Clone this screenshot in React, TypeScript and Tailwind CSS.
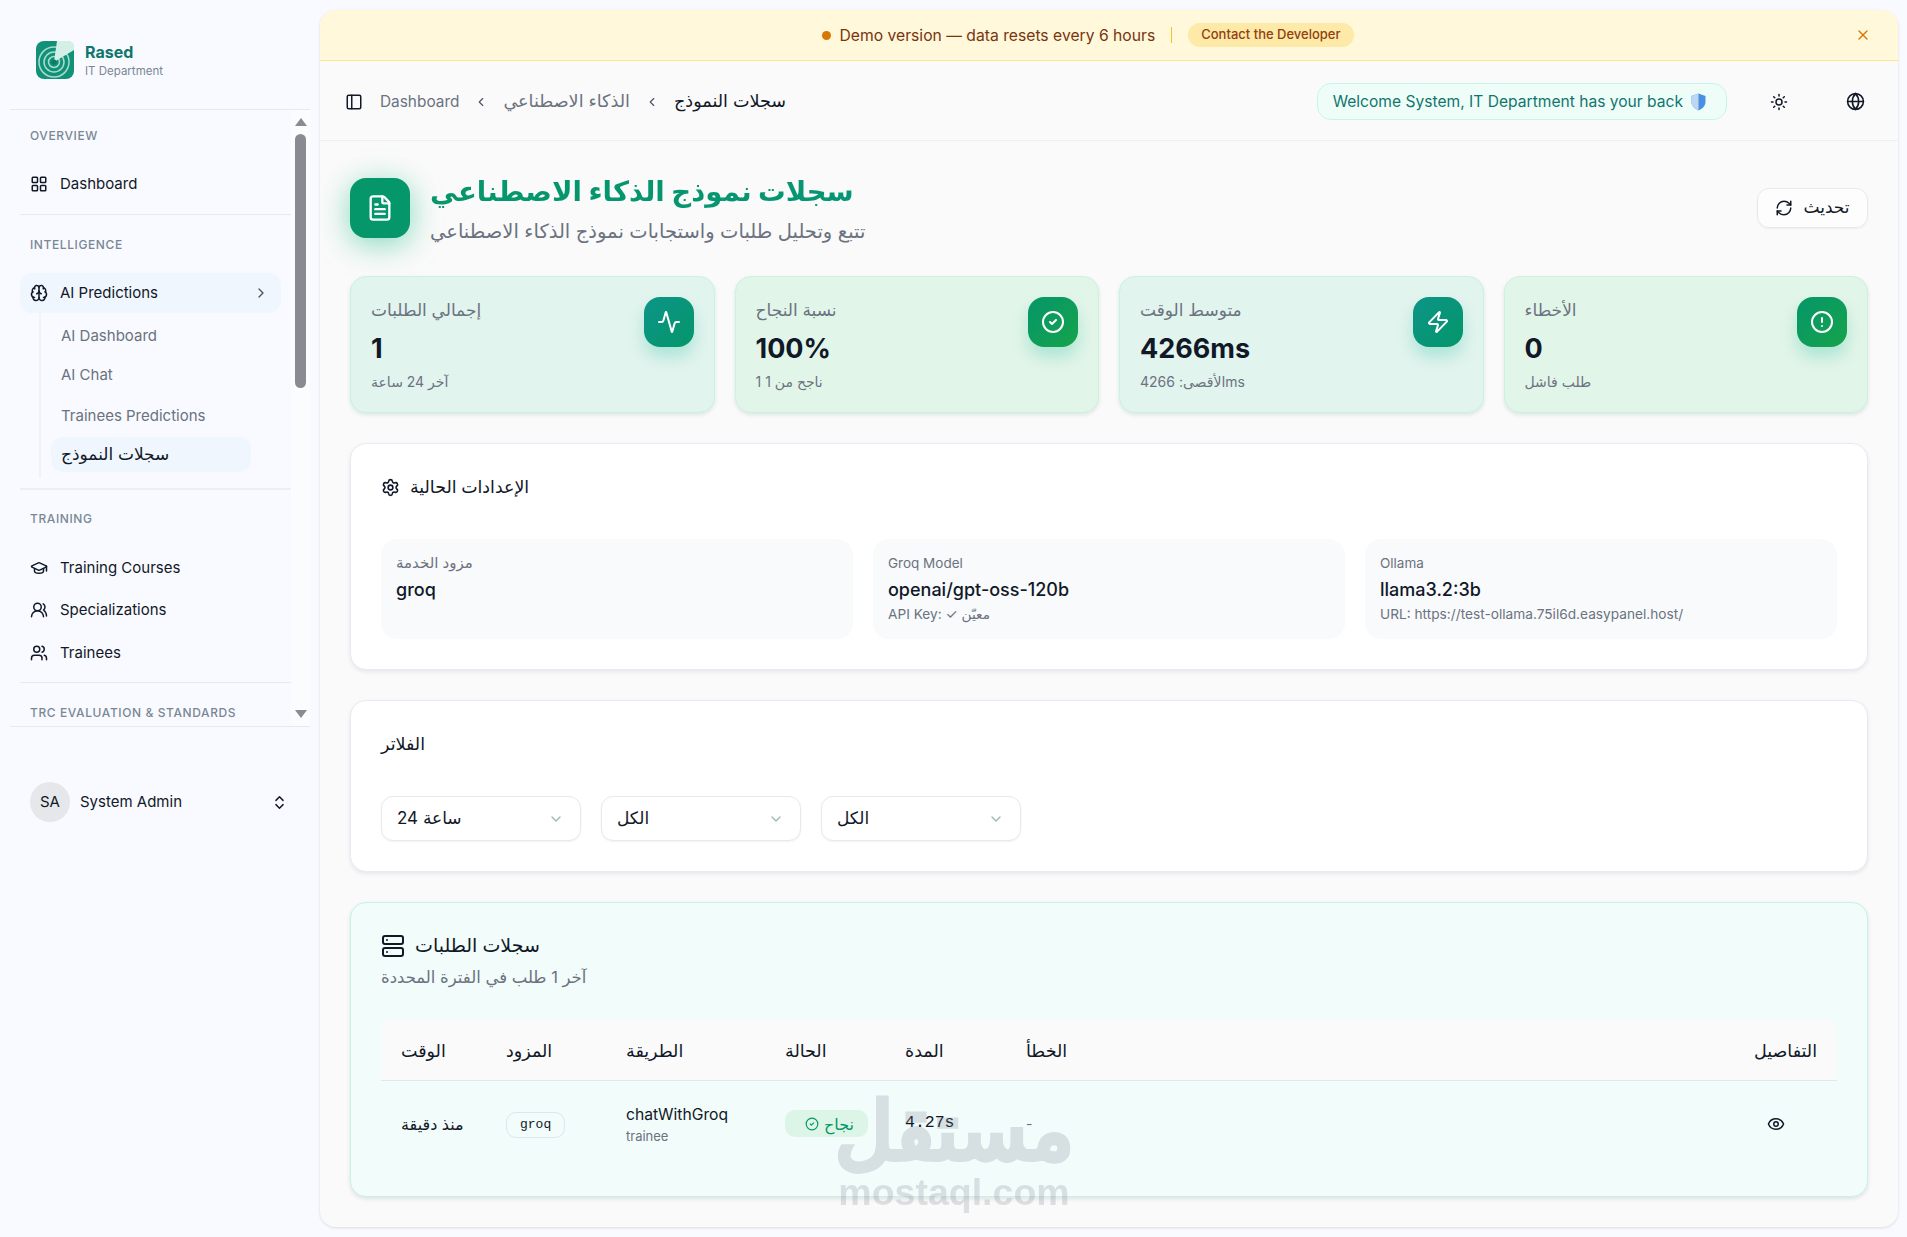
import React from 'react';
import {
  Activity,
  Brain,
  ChevronDown,
  ChevronLeft,
  ChevronRight,
  ChevronsUpDown,
  CircleAlert,
  CircleCheck,
  Eye,
  FileText,
  Globe,
  GraduationCap,
  LayoutGrid,
  PanelLeft,
  RefreshCw,
  Server,
  Settings,
  Sun,
  Users,
  UsersRound,
  X,
  Zap,
} from 'lucide-react';

const FONT = "font-['Inter','Noto_Sans','DejaVu_Sans',sans-serif]";

const stats = [
  { label: 'إجمالي الطلبات', value: '1', sub: 'آخر 24 ساعة', icon: Activity, tone: 'teal' },
  { label: 'نسبة النجاح', value: '100%', sub: '1 ناجح من 1', icon: CircleCheck, tone: 'green' },
  { label: 'متوسط الوقت', value: '4266ms', sub: 'الأقصى: 4266ms', icon: Zap, tone: 'teal' },
  { label: 'الأخطاء', value: '0', sub: 'طلب فاشل', icon: CircleAlert, tone: 'green' },
];

const Logo = () => (
  <svg width="38" height="38" viewBox="0 0 38 38" className="shrink-0">
    <rect width="38" height="38" rx="8" fill="#12917a" />
    <g fill="none" stroke="#a9dccb" strokeWidth="1.5">
      <circle cx="18" cy="21" r="15" />
      <circle cx="18" cy="21" r="10" />
      <circle cx="18" cy="21" r="5.5" />
    </g>
    <path d="M18 21 L21 0 H32 Q38 0 38 6 V9 Z" fill="#d4efe5" />
    <circle cx="18" cy="21" r="2.6" fill="#0b7d63" />
  </svg>
);

const NavItem: React.FC<{ icon: React.ElementType; label: string; className: string }> = ({ icon: Icon, label, className }) => (
  <div className={`flex items-center gap-3 pl-[10px] text-[15px] text-[#111827] ${className}`}>
    <Icon size={18} strokeWidth={2} />
    <span>{label}</span>
  </div>
);

const SectionLabel: React.FC<{ children: React.ReactNode }> = ({ children }) => (
  <div className="pl-[10px] text-[12px] font-medium leading-4 tracking-[0.6px] text-[#7a8794]">{children}</div>
);

const Sidebar = () => (
  <aside className="flex w-[320px] shrink-0 flex-col px-[10px]">
    <div className="flex h-[110px] items-center gap-[11px] border-b border-[#e6e9ef] pl-[26px] pt-[10px]">
      <Logo />
      <div>
        <div className="text-[16px] font-bold leading-[22px] text-[#0f766e]">Rased</div>
        <div className="text-[11.5px] leading-4 text-[#7a8794]">IT Department</div>
      </div>
    </div>

    <div className="relative h-[617px] overflow-hidden border-b border-[#e6e9ef]">
      <div className="absolute right-0 top-0 flex h-full w-[19px] flex-col items-center bg-[#fbfcfd]">
        <div className="mt-[8px] h-0 w-0 border-x-[6px] border-b-[8px] border-x-transparent border-b-[#8b8a92]" />
        <div className="mt-[8px] h-[254px] w-[11px] rounded-full bg-[#8b8a92]" />
        <div className="mb-[8px] mt-auto h-0 w-0 border-x-[6px] border-t-[8px] border-x-transparent border-t-[#8b8a92]" />
      </div>

      <div className="w-[281px] pl-[10px]">
        <div className="pt-[18px]">
          <SectionLabel>OVERVIEW</SectionLabel>
        </div>
        <NavItem icon={LayoutGrid} label="Dashboard" className="mt-[28px] h-[24px]" />
        <div className="mt-[18px] border-b border-[#e6e9ef]" />

        <div className="pt-[22px]">
          <SectionLabel>INTELLIGENCE</SectionLabel>
        </div>
        <div className="mt-[20px] flex h-[40px] w-[261px] items-center gap-3 rounded-xl bg-[#f0f6fe] pl-[10px] pr-[12px] text-[15px] text-[#111827]">
          <Brain size={18} strokeWidth={2} />
          <span className="flex-1">AI Predictions</span>
          <ChevronRight size={16} className="text-[#4b5563]" />
        </div>
        <div className="ml-[19px] flex h-[165px] flex-col border-l-2 border-[#f0f2f6] pl-[10px] text-[15px] text-[#6b7280]">
          <div className="flex h-[42px] shrink-0 items-center pl-[10px] pt-[4px]">AI Dashboard</div>
          <div className="flex h-[41px] shrink-0 items-center pl-[10px]">AI Chat</div>
          <div className="flex h-[41px] shrink-0 items-center pl-[10px]">Trainees Predictions</div>
          <div className="flex h-[35px] w-[200px] shrink-0 items-center rounded-xl bg-[#f0f6fe] pl-[10px] pt-[1px] text-[17px] text-[#111827]">سجلات النموذج</div>
        </div>
        <div className="mt-[10px] border-b-2 border-[#eceff4]" />

        <div className="pt-[21px]">
          <SectionLabel>TRAINING</SectionLabel>
        </div>
        <NavItem icon={GraduationCap} label="Training Courses" className="mt-[29px] h-[24px]" />
        <NavItem icon={UsersRound} label="Specializations" className="mt-[18px] h-[24px]" />
        <NavItem icon={Users} label="Trainees" className="mt-[19px] h-[24px]" />
        <div className="mt-[17px] border-b border-[#e6e9ef]" />

        <div className="pt-[22px]">
          <SectionLabel>TRC EVALUATION &amp; STANDARDS</SectionLabel>
        </div>
      </div>
    </div>

    <div className="mt-[55px] flex items-center pl-[20px] pr-[22px]">
      <div className="flex h-[40px] w-[40px] items-center justify-center rounded-full bg-[#e5e7eb] text-[15px] text-[#111827]">SA</div>
      <span className="ml-[10px] flex-1 text-[15px] text-[#111827]">System Admin</span>
      <ChevronsUpDown size={17} className="text-[#111827]" />
    </div>
  </aside>
);

const Banner = () => (
  <div className="relative flex h-[51px] items-center justify-center border-b border-[#fde68a] bg-[#fff8db] pr-[42px] text-[15.7px]">
    <span className="h-[9px] w-[9px] rounded-full bg-[#d97706]" />
    <span className="ml-[8px] pt-[1px] text-[#78350f]">Demo version — data resets every 6 hours</span>
    <span className="mx-[16px] h-[16px] w-px bg-[#fbbf24]" />
    <span className="flex h-[24px] items-center rounded-full bg-[#fde9a8] px-[13px] text-[13px] font-medium text-[#92400e]">Contact the Developer</span>
    <X size={16} className="absolute right-[27px] top-[17px] text-[#d97706]" />
  </div>
);

const Header = () => (
  <div className="flex h-[80px] items-center border-b border-[#eef1f4] pl-[25px] pr-[33px] pt-[2px]">
    <PanelLeft size={18} className="text-[#111827]" />
    <span className="ml-[17px] text-[15.4px] text-[#6b7280]">Dashboard</span>
    <ChevronLeft size={14} className="mx-[15px] text-[#4b5563]" />
    <span className="text-[17.6px] text-[#6b7280]">الذكاء الاصطناعي</span>
    <ChevronLeft size={14} className="mx-[15px] text-[#4b5563]" />
    <span className="text-[17.6px] text-[#111827]">سجلات النموذج</span>

    <div className="ml-auto flex h-[37px] items-center gap-[8px] rounded-[14px] border border-[#c5f5ea] bg-[#effdf9] pl-[15px] pr-[20px] text-[15.6px] text-[#0f766e]">
      Welcome System, IT Department has your back
      <svg width="15" height="18" viewBox="0 0 15 18">
        <path d="M7.5 0.5 L14.5 3 V9 C14.5 13 11 16 7.5 17.5 C4 16 0.5 13 0.5 9 V3 Z" fill="#4a90e2" />
        <path d="M7.5 0.5 L0.5 3 V9 C0.5 13 4 16 7.5 17.5 Z" fill="#bcd7f2" />
      </svg>
    </div>
    <Sun size={18} className="ml-[43px] text-[#111827]" />
    <Globe size={19} className="ml-[58px] text-[#111827]" />
  </div>
);

const StatCard: React.FC<(typeof stats)[number]> = ({ label, value, sub, icon: Icon, tone }) => (
  <div
    className={`flex h-[137px] items-start justify-between rounded-2xl border p-5 shadow-[0_2px_4px_rgba(16,80,70,0.12)] ${
      tone === 'teal' ? 'border-[#c5f3e8] bg-[#e2f4ee]' : 'border-[#ccf2df] bg-[#e2f5e9]'
    }`}
  >
    <div>
      <div className="text-[17px] leading-[26px] text-[#6b7280]">{label}</div>
      <div className="mt-[7px] text-[27px] font-bold leading-[38px] text-[#111827]">{value}</div>
      <div className="mt-[4px] text-[14px] leading-[20px] text-[#6b7280]">{sub}</div>
    </div>
    <div
      className={`flex h-[50px] w-[50px] items-center justify-center rounded-2xl text-white shadow-[0_10px_16px_rgba(16,185,150,0.25)] ${
        tone === 'teal' ? 'bg-gradient-to-br from-[#0d9488] to-[#059669]' : 'bg-gradient-to-br from-[#059669] to-[#16a34a]'
      }`}
    >
      <Icon size={24} strokeWidth={2} />
    </div>
  </div>
);

const ConfigTile: React.FC<{ label: string; value: string; note?: string; labelClass?: string }> = ({ label, value, note, labelClass = 'text-[13.5px]' }) => (
  <div className="h-[100px] rounded-2xl bg-[#f9fafb] px-[15px] pt-[14px]">
    <div className={`leading-[20px] text-[#6b7280] ${labelClass}`}>{label}</div>
    <div className="mt-[4px] text-[18px] font-medium leading-[26px] text-[#111827]">{value}</div>
    {note && <div className="mt-[1px] text-[13.7px] leading-[20px] text-[#6b7280]">{note}</div>}
  </div>
);

const FilterSelect: React.FC<{ value: string }> = ({ value }) => (
  <div className="flex h-[45px] w-[200px] items-center justify-between rounded-xl border border-[#e5e9f0] bg-white pl-[15px] pr-[16px] text-[17px] text-[#111827] shadow-[0_1px_2px_rgba(0,0,0,0.05)]">
    <span className="pt-[1px]">{value}</span>
    <ChevronDown size={16} className="text-[#9db8b2]" />
  </div>
);

const LogsTable = () => (
  <table className="mt-[31px] w-full border-collapse text-left">
    <thead>
      <tr className="h-[60px] border-b border-[#dfe7f0] bg-[#fafafa] text-[17.5px] text-[#111827]">
        <th className="w-[125px] rounded-tl-xl pl-5 pt-[2px] font-medium">الوقت</th>
        <th className="w-[120px] pt-[2px] font-medium">المزود</th>
        <th className="w-[159px] pt-[2px] font-medium">الطريقة</th>
        <th className="w-[120px] pt-[2px] font-medium">الحالة</th>
        <th className="w-[121px] pt-[2px] font-medium">المدة</th>
        <th className="pt-[2px] font-medium">الخطأ</th>
        <th className="rounded-tr-xl pr-5 pt-[2px] text-right font-medium">التفاصيل</th>
      </tr>
    </thead>
    <tbody>
      <tr className="h-[87px]">
        <td className="pl-5 text-[16px] text-[#111827]">منذ دقيقة</td>
        <td>
          <span className="inline-flex h-[26px] items-center rounded-[10px] border border-[#dfe5ec] px-[13px] font-['Liberation_Mono',monospace] text-[13px] text-[#111827]">groq</span>
        </td>
        <td className="pt-[3px]">
          <div className="text-[15.7px] leading-[20px] text-[#111827]">chatWithGroq</div>
          <div className="mt-[2px] text-[13px] leading-[18px] text-[#6b7280]">trainee</div>
        </td>
        <td>
          <span className="inline-flex h-[27px] items-center gap-[5px] rounded-[10px] bg-[#dcf5e7] pl-[20px] pr-[14px] text-[16px] text-[#059669]">
            <CircleCheck size={14} />
            نجاح
          </span>
        </td>
        <td className="font-['Liberation_Mono',monospace] text-[16.5px] text-[#111827]">4.27s</td>
        <td className="text-[14px] text-[#6b7280]">-</td>
        <td className="pr-[52px] text-right">
          <Eye size={18} className="ml-auto text-[#111827]" />
        </td>
      </tr>
    </tbody>
  </table>
);

export default function App() {
  return (
    <div className={`relative flex min-h-[1237px] bg-[#f8faff] ${FONT}`}>
      <Sidebar />
      <main className="mb-[10px] mr-[9px] mt-[10px] flex-1 overflow-hidden rounded-2xl bg-[#fafafa] shadow-[0_1px_3px_rgba(0,0,0,0.12)]">
        <Banner />
        <Header />
        <div className="px-[30px] pt-[37px]">
          <div className="flex h-[60px] items-center gap-[20px]">
            <div className="flex h-[60px] w-[60px] items-center justify-center rounded-2xl bg-[#059669] text-white shadow-[0_6px_30px_rgba(16,185,129,0.5)]">
              <FileText size={28} />
            </div>
            <div className="flex-1">
              <h1 className="bg-gradient-to-r from-[#059669] to-[#0d9488] bg-clip-text text-[27.6px] font-bold leading-[36px] text-transparent">
                سجلات نموذج الذكاء الاصطناعي
              </h1>
              <p className="mt-[10px] text-[19.5px] leading-[24px] text-[#6b7280]">تتبع وتحليل طلبات واستجابات نموذج الذكاء الاصطناعي</p>
            </div>
            <div className="flex h-[40px] w-[111px] items-center justify-center gap-[10px] rounded-xl border border-[#e5e9f0] bg-white/50 text-[17px] text-[#111827] shadow-[0_1px_2px_rgba(0,0,0,0.05)]">
              <RefreshCw size={18} />
              تحديث
            </div>
          </div>

          <div className="mt-[38px] grid grid-cols-4 gap-5">
            {stats.map((s) => (
              <StatCard key={s.label} {...s} />
            ))}
          </div>

          <section className="mt-[30px] h-[227px] rounded-2xl border border-[#e5ebf5] bg-white px-[30px] pt-[30px] shadow-[0_2px_4px_rgba(0,0,0,0.08)]">
            <div className="flex h-[26px] items-center gap-[10px] text-[17.4px] font-medium text-[#111827]">
              <Settings size={19} />
              الإعدادات الحالية
            </div>
            <div className="mt-[39px] grid grid-cols-3 gap-5">
              <ConfigTile label="مزود الخدمة" value="groq" labelClass="text-[15px]" />
              <ConfigTile label="Groq Model" value="openai/gpt-oss-120b" note="API Key: ✓ معيّن" />
              <ConfigTile label="Ollama" value="llama3.2:3b" note="URL: https://test-ollama.75il6d.easypanel.host/" />
            </div>
          </section>

          <section className="mt-[30px] h-[172px] rounded-2xl border border-[#e5ebf5] bg-white px-[30px] pt-[30px] shadow-[0_2px_4px_rgba(0,0,0,0.08)]">
            <div className="h-[26px] text-[17.5px] font-medium leading-[26px] text-[#111827]">الفلاتر</div>
            <div className="mt-[39px] flex gap-5">
              <FilterSelect value="24 ساعة" />
              <FilterSelect value="الكل" />
              <FilterSelect value="الكل" />
            </div>
          </section>

          <section className="mt-[30px] h-[295px] rounded-2xl border border-[#c5f3e8] bg-[#f2fcfa] px-[30px] pt-[28px] shadow-[0_2px_4px_rgba(0,0,0,0.1)]">
            <div className="flex h-[30px] items-center gap-[10px] text-[19px] font-medium text-[#111827]">
              <Server size={24} />
              سجلات الطلبات
            </div>
            <p className="mt-[4px] text-[16.5px] leading-[24px] text-[#6b7280]">آخر 1 طلب في الفترة المحددة</p>
            <LogsTable />
          </section>
        </div>
      </main>

      {/* mostaql watermark baked into the shot */}
      <div className="pointer-events-none absolute left-[838px] top-[1090px] flex w-[232px] flex-col items-center font-['Liberation_Sans',sans-serif] font-bold text-[#6b7280] opacity-20">
        <span className="text-[80px] leading-[84px] [-webkit-text-stroke:3px_#6b7280]">مستقل</span>
        <span className="text-[37.5px] leading-[36px]">mostaql.com</span>
      </div>
    </div>
  );
}
